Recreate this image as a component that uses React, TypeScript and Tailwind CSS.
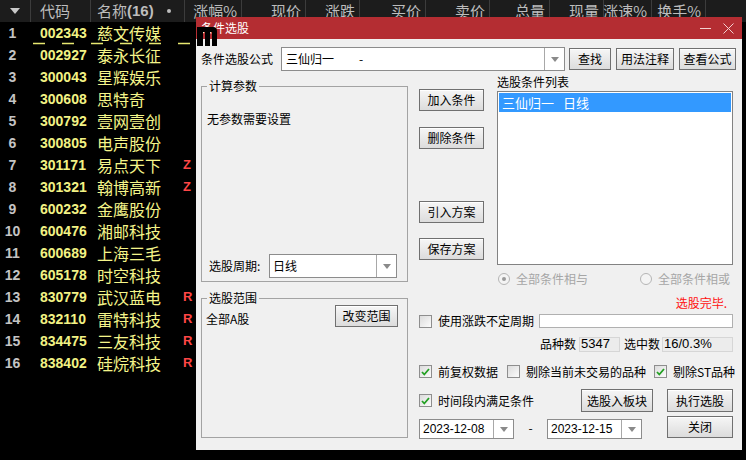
import React from "react";

const cjk = "font-['Noto_Sans_CJK_SC',sans-serif]";
const arial = "font-['Liberation_Sans','Noto_Sans_CJK_SC',sans-serif]";

const stocks: [string, string, string][] = [
  ["002343", "慈文传媒", ""],
  ["002927", "泰永长征", ""],
  ["300043", "星辉娱乐", ""],
  ["300608", "思特奇", ""],
  ["300792", "壹网壹创", ""],
  ["300805", "电声股份", ""],
  ["301171", "易点天下", "Z"],
  ["301321", "翰博高新", "Z"],
  ["600232", "金鹰股份", ""],
  ["600476", "湘邮科技", ""],
  ["600689", "上海三毛", ""],
  ["605178", "时空科技", ""],
  ["830779", "武汉蓝电", "R"],
  ["832110", "雷特科技", "R"],
  ["834475", "三友科技", "R"],
  ["838402", "硅烷科技", "R"],
];

const numCols: [string, string][] = [
  ["涨幅%", "w-[57px]"],
  ["现价", "w-[64px]"],
  ["涨跌", "w-[54px]"],
  ["买价", "w-[66px]"],
  ["卖价", "w-[64px]"],
  ["总量", "w-[60px]"],
  ["现量", "w-[54px]"],
  ["涨速%", "w-[48px]"],
  ["换手%", "w-[54px]"],
];

function Btn({ label, className = "" }: { label: string; className?: string }) {
  return (
    <div
      className={`flex items-center justify-center whitespace-nowrap border border-[#707070] bg-gradient-to-b from-[#f6f6f6] to-[#dcdcdc] text-[12px] leading-none text-black shadow-[inset_0_1px_0_#ffffff] ${className}`}
    >
      {label}
    </div>
  );
}

function Arrow() {
  return (
    <div className="flex h-full w-[20px] items-center justify-center border-l border-[#a8a8a8]">
      <svg width="8" height="5" viewBox="0 0 8 5">
        <path d="M0 0h8L4 5z" fill="#8a8a8a" />
      </svg>
    </div>
  );
}

function Combo({ value, className = "", text = "text-[12px]" }: { value: string; className?: string; text?: string }) {
  return (
    <div className={`flex items-center border border-[#8c8c8c] bg-white ${className}`}>
      <div className={`flex-1 pl-[3px] leading-none text-black ${text}`}>{value}</div>
      <Arrow />
    </div>
  );
}

function Check({ checked }: { checked: boolean }) {
  return (
    <div className="flex h-[13px] w-[13px] shrink-0 items-center justify-center border border-[#8e8e8e] bg-gradient-to-br from-[#dcdcdc] to-[#fbfbfb]">
      {checked && (
        <svg width="9" height="8" viewBox="0 0 9 8">
          <path d="M1 4l2.3 2.5L8 1" stroke="#22a022" strokeWidth="1.8" fill="none" />
        </svg>
      )}
    </div>
  );
}

function CheckItem({ label, checked, className = "" }: { label: string; checked: boolean; className?: string }) {
  return (
    <div className={`flex items-center whitespace-nowrap ${className}`}>
      <Check checked={checked} />
      <span className="ml-[6px] text-[12px] leading-[14px] text-black">{label}</span>
    </div>
  );
}

function Radio({ on }: { on: boolean }) {
  return (
    <div className="flex h-[12px] w-[12px] items-center justify-center rounded-full border border-[#b5b5b5] bg-[#f4f4f4]">
      {on && <div className="h-[4px] w-[4px] rounded-full bg-[#9a9a9a]" />}
    </div>
  );
}

function StockTable() {
  return (
    <div className="w-[746px]">
      <div className={`flex h-[22px] items-center whitespace-nowrap bg-[#1c1c1c] text-[15px] text-[#bdbdbd] ${cjk}`}>
        <div className="flex h-full w-[31px] shrink-0 items-center justify-center border-r border-[#3c3c3c]">
          <svg width="10" height="6" viewBox="0 0 10 6">
            <path d="M0 0h10L5 6z" fill="#c8c8c8" />
          </svg>
        </div>
        <div className="flex h-full w-[60px] shrink-0 items-center border-r border-[#3c3c3c] pl-[9px]">代码</div>
        <div className="flex h-full w-[94px] shrink-0 items-center border-r border-[#3c3c3c] pl-[6px]">
          名称<span className={`${arial} font-bold`}>(16)</span>
          <span className="ml-[13px] h-[4px] w-[4px] rounded-full bg-[#bdbdbd]" />
        </div>
        {numCols.map(([t, w]) => (
          <div key={t} className={`flex h-full ${w} shrink-0 items-center justify-end border-r border-[#3c3c3c] pr-[4px]`}>
            {t}
          </div>
        ))}
        <div className="flex-1" />
      </div>
      {stocks.map(([code, name, flag], i) => (
        <div key={code} className="relative flex h-[22px] items-center">
          <div className={`w-[25px] text-center text-[14px] font-bold text-[#c4c4c4] ${arial}`}>{i + 1}</div>
          <div className={`ml-[15px] w-[57px] text-[14px] font-bold text-[#f2f284] ${arial}`}>{code}</div>
          <div className={`w-[86px] text-[16px] leading-none text-[#f5f58a] ${cjk}`}>{name}</div>
          <div className={`w-[12px] text-[13px] font-bold text-[#ff4646] ${arial}`}>{flag}</div>
          {i === 0 && (
            <svg className="absolute left-0 top-[20px]" width="200" height="3">
              <line x1="33" y1="1.5" x2="196" y2="1.5" stroke="#e8e870" strokeWidth="1.5" strokeDasharray="12 17" />
            </svg>
          )}
        </div>
      ))}
    </div>
  );
}

function Dialog() {
  return (
    <div className={`absolute left-[196px] top-[17px] flex h-[433px] w-[546px] flex-col bg-[#f0f0f0] ${cjk}`}>
      <div className="flex h-[22px] items-center bg-[#b42d32] pl-[5px] pr-[8px] text-[12px] text-white">
        <span>条件选股</span>
        <div className="flex-1" />
        <div className="mr-[12px] h-px w-[11px] bg-[#f3d0d0]" />
        <svg width="11" height="11" viewBox="0 0 11 11">
          <path d="M0.5 0.5l10 10M10.5 0.5l-10 10" stroke="#f3d0d0" strokeWidth="1" />
        </svg>
      </div>

      <div className="flex flex-col pl-[5px] pt-[8px]">
        <div className="flex h-[24px] items-center">
          <div className="w-[80px] text-[12px] leading-none text-black">条件选股公式</div>
          <div className="flex h-[24px] w-[284px] items-center border border-[#8c8c8c] bg-white">
            <div className="flex-1 pl-[4px] text-[12px] leading-none text-black">
              三仙归一<span className="ml-[25px]">-</span>
            </div>
            <Arrow />
          </div>
          <Btn label="查找" className="ml-[4px] h-[22px] w-[42px]" />
          <Btn label="用法注释" className="ml-[5px] h-[22px] w-[58px]" />
          <Btn label="查看公式" className="ml-[5px] h-[22px] w-[57px]" />
        </div>

        <div className="flex">
          <div className="flex w-[207px] flex-col">
            <fieldset className="mt-[8px] h-[203px] border border-[#a3a3a3]">
              <legend className="ml-[5px] px-[2px] text-[12px] leading-[14px] text-black">计算参数</legend>
              <div className="mt-[19px] pl-[5px] text-[12px] leading-[14px] text-black">无参数需要设置</div>
              <div className="mt-[128px] flex h-[24px] items-center pl-[7px]">
                <span className="w-[60px] text-[12px] leading-none text-black">选股周期:</span>
                <Combo value="日线" className="h-[24px] w-[128px]" />
              </div>
            </fieldset>
            <fieldset className="mt-[9px] h-[147px] border border-[#a3a3a3]">
              <legend className="ml-[5px] px-[2px] text-[12px] leading-[14px] text-black">选股范围</legend>
              <div className="flex items-start justify-between pl-[4px] pr-[9px]">
                <span className="mt-[7px] text-[12px] leading-[14px] text-black">全部A股</span>
                <Btn label="改变范围" className="h-[22px] w-[63px]" />
              </div>
            </fieldset>
          </div>

          <div className="ml-[11px] flex w-[314px] flex-col">
            <div className="flex">
              <div className="flex w-[65px] flex-col">
                <Btn label="加入条件" className="mt-[18px] h-[22px] w-[65px]" />
                <Btn label="删除条件" className="mt-[16px] h-[22px] w-[65px]" />
                <Btn label="引入方案" className="mt-[52px] h-[22px] w-[65px]" />
                <Btn label="保存方案" className="mt-[15px] h-[22px] w-[65px]" />
              </div>
              <div className="ml-[13px] flex w-[236px] flex-col">
                <div className="mt-[4px] text-[12px] leading-[14px] text-black">选股条件列表</div>
                <div className="mt-[2px] h-[174px] border border-[#828282] bg-white p-px">
                  <div className="flex h-[19px] items-center bg-[#3399ff] pl-[3px] text-[13px] leading-none text-white">
                    三仙归一<span className="ml-[9px]">日线</span>
                  </div>
                </div>
                <div className="mt-[7px] flex h-[13px] items-center justify-between whitespace-nowrap pl-px pr-[3px] text-[12px] text-[#a6a6a6]">
                  <div className="flex items-center">
                    <Radio on />
                    <span className="ml-[6px] leading-none">全部条件相与</span>
                  </div>
                  <div className="flex items-center">
                    <Radio on={false} />
                    <span className="ml-[6px] leading-none">全部条件相或</span>
                  </div>
                </div>
              </div>
            </div>

            <div className="mt-[11px] pr-[6px] text-right text-[12px] leading-[14px] text-[#ff1010]">选股完毕.</div>

            <div className="mt-[4px] flex h-[14px] items-center">
              <CheckItem label="使用涨跌不定周期" checked={false} className="w-[120px]" />
              <div className="h-[14px] flex-1 border border-[#b0b0b0] bg-white" />
            </div>

            <div className="mt-[9px] flex h-[14px] items-center justify-end whitespace-nowrap text-[12px] text-black">
              <span className="leading-none">品种数</span>
              <div className={`ml-[3px] flex h-[15px] w-[41px] items-center border border-[#d6d6d6] bg-[#ececec] pl-[1px] text-[13px] ${arial}`}>5347</div>
              <span className="ml-[4px] leading-none">选中数</span>
              <div className={`ml-[2px] flex h-[15px] w-[71px] items-center border border-[#d6d6d6] bg-[#ececec] pl-[1px] text-[13px] ${arial}`}>16/0.3%</div>
            </div>

            <div className="mt-[14px] flex h-[13px] items-center">
              <CheckItem label="前复权数据" checked className="w-[88px] shrink-0" />
              <CheckItem label="剔除当前未交易的品种" checked={false} className="w-[147px] shrink-0" />
              <CheckItem label="剔除ST品种" checked className="shrink-0" />
            </div>

            <div className="mt-[11px] flex h-[23px] items-center">
              <CheckItem label="时间段内满足条件" checked className="w-[162px]" />
              <Btn label="选股入板块" className="h-[23px] w-[72px]" />
              <Btn label="执行选股" className="ml-[14px] h-[23px] w-[66px]" />
            </div>

            <div className="mt-[4px] flex h-[22px] items-start">
              <Combo value="2023-12-08" text={`text-[12px] ${arial}`} className="mt-[3px] h-[20px] w-[95px]" />
              <div className="mt-[6px] w-[33px] text-center text-[12px] leading-none text-black">-</div>
              <Combo value="2023-12-15" text={`text-[12px] ${arial}`} className="mt-[3px] h-[20px] w-[95px]" />
              <Btn label="关闭" className="ml-[25px] h-[22px] w-[66px]" />
            </div>
          </div>
        </div>
      </div>
    </div>
  );
}

export default function App() {
  return (
    <div className="relative h-[460px] w-[746px] overflow-hidden bg-black">
      <StockTable />
      <Dialog />
      <svg className="absolute left-[197px] top-[27px]" width="20" height="19" viewBox="0 0 20 19">
        <path d="M0 0h16a4 4 0 0 1 4 4v15h-5V5h-2v14H8V5H6v14H0z" fill="#000" />
      </svg>
    </div>
  );
}
